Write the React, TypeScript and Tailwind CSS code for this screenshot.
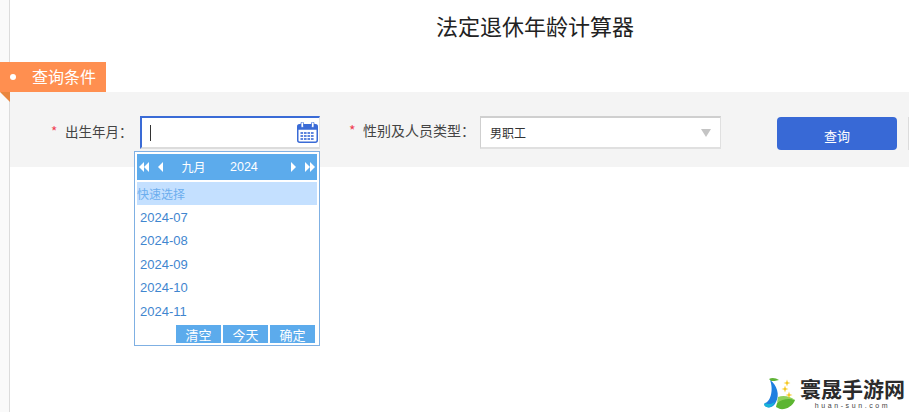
import React from "react";

const cjk = { fontFamily: '"Noto Sans CJK SC","Liberation Sans",sans-serif' };

function Cal() {
  return (
    <svg width="21" height="21" viewBox="0 0 21 21" className="block">
      <rect x="0.75" y="2.75" width="19.5" height="17.5" rx="2" fill="#fff" stroke="#3a6bd6" strokeWidth="1.5" />
      <rect x="0.75" y="2.75" width="19.5" height="5" fill="#3a6bd6" />
      <rect x="4" y="0" width="2.5" height="5.5" rx="1.2" fill="#fff" stroke="#3a6bd6" strokeWidth="0.8" />
      <rect x="14.5" y="0" width="2.5" height="5.5" rx="1.2" fill="#fff" stroke="#3a6bd6" strokeWidth="0.8" />
      {[10, 13, 16].map((y) =>
        [3.5, 7, 10.5, 14].map((x) => <rect key={`${x}-${y}`} x={x} y={y} width="2.6" height="2" fill="#5f86dd" />)
      )}
    </svg>
  );
}

function Tri({ dir, double }: { dir: "l" | "r"; double?: boolean }) {
  const one = dir === "l" ? "M5 0 L5 10 L0 5 Z" : "M0 0 L0 10 L5 5 Z";
  const two = dir === "l" ? "M10 0 L10 10 L5 5 Z" : "M5 0 L5 10 L10 5 Z";
  return (
    <svg width={double ? 10 : 5} height="10" viewBox={double ? "0 0 10 10" : "0 0 5 10"} fill="#fff" className="block">
      <path d={one} />
      {double && <path d={two} />}
    </svg>
  );
}

function Star({ x, y }: { x: number; y: number }) {
  return (
    <path
      d={`M${x} ${y - 3.5} L${x + 0.8} ${y - 0.8} L${x + 3.5} ${y} L${x + 0.8} ${y + 0.8} L${x} ${y + 3.5} L${x - 0.8} ${y + 0.8} L${x - 3.5} ${y} L${x - 0.8} ${y - 0.8} Z`}
      fill="#f5c518"
    />
  );
}

function Logo() {
  return (
    <svg width="34" height="34" viewBox="0 0 34 34" className="block">
      <path d="M7 2 C10 0 14 1 17 3 C14 4 11 4 9 4 Z" fill="#5fb336" />
      <path d="M14 30 C15 22 23 19 33 23 C31 29 24 33 18 32 Z" fill="#5cb531" />
      <path d="M16 20 C21 18 28 19 33 23 C27 21 20 22 15 26 Z" fill="#8fd05a" />
      <path d="M8 3 C15 8 18 18 14 25 C12 30 7 32 3 29 C2 28 2 27 3 26 C8 25 12 14 8 3 Z" fill="#1f7fe0" />
      <path d="M3 26 C6 28 10 27 13 25 C11 30 6 32 3 29 C2 28 2 27 3 26 Z" fill="#18b4d8" />
      <Star x={25} y={6} />
      <Star x={23} y={12} />
      <Star x={27} y={18} />
    </svg>
  );
}

export default function App() {
  const rows = ["2024-07", "2024-08", "2024-09", "2024-10", "2024-11"];
  return (
    <div className="relative flex h-[412px] w-[909px] overflow-hidden bg-white" style={cjk}>
      <div className="w-[10px] shrink-0 border-r border-[#dcdcdc] bg-[#fafafa]" />
      <div className="min-w-0 flex-1">
        <h1 className="flex h-[62px] items-center justify-center pl-[151px] pb-[11px] text-[22px] font-normal text-[#222]">
          法定退休年龄计算器
        </h1>
        <div className="relative -ml-[10px] flex h-[30px] w-[106px] items-center bg-[#ff8f50] pb-[2px] text-[16px] text-white">
          <span className="ml-[10px] mt-[2px] h-[6px] w-[6px] rounded-full bg-white" />
          <span className="ml-[16px]">查询条件</span>
          <span className="absolute left-0 top-[30px] h-0 w-0 border-l-[10px] border-t-[10px] border-l-transparent border-t-[#e9863f]" />
        </div>
        <div className="relative flex h-[75px] items-start bg-[#f4f4f4] text-[#444]">
          <div className="ml-[41px] mt-[29px] flex w-[89px] items-center text-[13.5px] leading-[20px]">
            <span className="w-[14px] text-[#f03c50]">*</span>
            <span className="whitespace-nowrap">出生年月：</span>
          </div>
          <div className="mt-[24px] flex h-[33px] w-[180px] items-center justify-between border-t-2 border-l-2 border-r border-b-2 border-t-[#3a6bd6] border-l-[#3a6bd6] border-r-[#e2e2e2] border-b-[#dcdcdc] bg-white pl-[8px] pr-[1px]">
            <span className="h-[16px] w-px bg-[#333]" />
            <Cal />
          </div>
          <div className="ml-[29px] mt-[28px] flex w-[131px] items-center text-[14px] leading-[20px]">
            <span className="w-[14px] text-[#f03c50]">*</span>
            <span className="whitespace-nowrap">性别及人员类型：</span>
          </div>
          <div className="mt-[24px] flex h-[33px] w-[241px] items-center justify-between border border-t-2 border-b-2 border-t-[#cfcfcf] border-l-[#cfcfcf] border-r-[#e0e0e0] border-b-[#e0e0e0] bg-white pl-[9px] pr-[9px] text-[12px] text-[#333]">
            <span>男职工</span>
            <span className="h-0 w-0 border-x-[5px] border-t-[8px] border-x-transparent border-t-[#c4c4c4]" />
          </div>
          <button className="ml-[56px] mt-[25px] flex h-[33px] w-[120px] items-center justify-center rounded-[4px] bg-[#3869d6] pt-[4px] text-[13px] text-white">
            查询
          </button>
          <div className="ml-[11px] mt-[25px] h-[33px] w-px bg-[#dcdcdc]" />
        </div>
      </div>

      <div className="absolute left-[134px] top-[151px] flex h-[195px] w-[186px] flex-col border border-[#7fb0e3] bg-white p-[2px]">
        <div className="flex h-[26px] items-center bg-[#5cabec] pl-[2px] pr-[2px] text-[12.5px] text-white" style={{ fontFamily: '"Liberation Sans","Noto Sans CJK SC",sans-serif' }}>
          <Tri dir="l" double />
          <span className="ml-[9px]"><Tri dir="l" /></span>
          <span className="ml-[18px] w-[25px] whitespace-nowrap text-center text-[12px]" style={cjk}>九月</span>
          <span className="ml-[24px] font-normal">2024</span>
          <span className="ml-auto"><Tri dir="r" /></span>
          <span className="ml-[9px]"><Tri dir="r" double /></span>
        </div>
        <div className="mt-[2px] flex h-[23px] items-center bg-[#c4e0ff] text-[12px] text-[#6caeee]">快速选择</div>
        <div className="flex flex-col pt-[1px] text-[13px] text-[#3f86cf]" style={{ fontFamily: '"Liberation Sans",sans-serif' }}>
          {rows.map((r) => (
            <div key={r} className="flex h-[23.4px] items-center pl-[3px]">{r}</div>
          ))}
        </div>
        <div className="mt-auto flex justify-end gap-[2px] pr-[2px] text-[13px] leading-[20px] text-white">
          <span className="h-[18px] w-[45px] bg-[#5cabec] text-center">清空</span>
          <span className="h-[18px] w-[45px] bg-[#5cabec] text-center">今天</span>
          <span className="h-[18px] w-[45px] bg-[#5cabec] text-center">确定</span>
        </div>
      </div>

      <div className="absolute left-[762px] top-[377px] flex items-start gap-[4px]">
        <Logo />
        <div className="flex flex-col items-center">
          <span className="whitespace-nowrap text-[21px] font-bold leading-[22px] text-[#2b2b2b]">寰晟手游网</span>
          <span className="mt-[3px] whitespace-nowrap text-[7px] leading-[8px] tracking-[2.6px] text-[#444]" style={{ fontFamily: '"Liberation Sans",sans-serif' }}>huan-sun.com</span>
        </div>
      </div>
    </div>
  );
}
